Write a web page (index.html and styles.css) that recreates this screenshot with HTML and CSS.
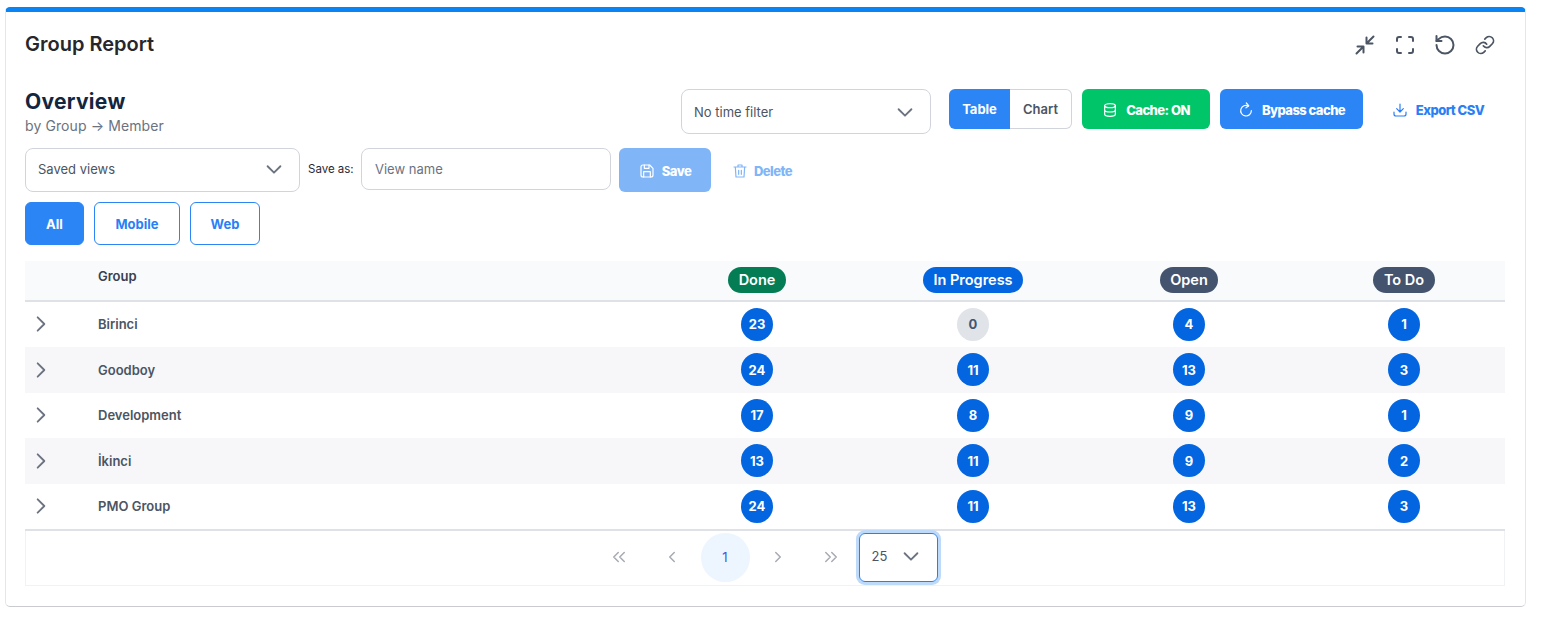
FILE: index.html
```html
<!DOCTYPE html>
<html lang="en">
<head>
<meta charset="utf-8">
<title>Group Report</title>
<link rel="stylesheet" href="styles.css">
</head>
<body>
<main class="card">
  <header class="card-head">
    <h1 class="card-title">Group Report</h1>
    <div class="tools">
      <svg class="tool" viewBox="0 0 24 24"><path d="M3.500 20.500l7-7M10.500 19.500v-6h-6M20.500 3.500l-7 7M13.500 4.500v6h6"/></svg>
      <svg class="tool" viewBox="0 0 24 24"><path d="M4 8V6a2 2 0 0 1 2-2h2M16 4h2a2 2 0 0 1 2 2v2M20 16v2a2 2 0 0 1-2 2h-2M8 20H6a2 2 0 0 1-2-2v-2"/></svg>
      <svg class="tool" viewBox="0 0 24 24"><path d="M3.500 12a8.500 8.500 0 1 0 8.500-8.500 9.200 9.200 0 0 0-6.400 2.600L3.500 8"/><path d="M3.500 3v5h5"/></svg>
      <svg class="tool" viewBox="-2 -2 28 28"><path d="M10 13a5 5 0 0 0 7.540.54l3-3a5 5 0 0 0-7.070-7.070l-1.720 1.710"/><path d="M14 11a5 5 0 0 0-7.540-.54l-3 3a5 5 0 0 0 7.070 7.070l1.710-1.710"/></svg>
    </div>
  </header>

  <section class="overview-row">
    <div class="overview-text">
      <h2 class="overview-title">Overview</h2>
      <p class="overview-sub">by Group → Member</p>
    </div>
    <div class="select time-select">
      <span>No time filter</span>
      <svg class="chev" viewBox="0 0 24 24"><path d="M5 9l7 7 7-7"/></svg>
    </div>
    <div class="seg">
      <span class="seg-item seg-on">Table</span>
      <span class="seg-item">Chart</span>
    </div>
    <span class="btn btn-green">
      <svg class="ico" viewBox="0 0 24 24"><ellipse cx="12" cy="5.500" rx="8" ry="3"/><path d="M4 5.500v13c0 1.700 3.600 3 8 3s8-1.300 8-3v-13M4 12c0 1.700 3.600 3 8 3s8-1.300 8-3"/></svg>
      Cache: ON
    </span>
    <span class="btn btn-blue">
      <svg class="ico" viewBox="0 0 24 24"><path d="M20 13a8 8 0 1 1-4.500-7.200"/><path d="M12.500 1.500l3.700 4.200-4.200 3"/></svg>
      Bypass cache
    </span>
    <span class="btn btn-link">
      <svg class="ico" viewBox="0 0 24 24"><path d="M3 15v3a3 3 0 0 0 3 3h12a3 3 0 0 0 3-3v-3M7 10l5 5 5-5M12 15V3"/></svg>
      Export CSV
    </span>
  </section>

  <section class="views-row">
    <div class="select views-select">
      <span>Saved views</span>
      <svg class="chev" viewBox="0 0 24 24"><path d="M5 9l7 7 7-7"/></svg>
    </div>
    <label class="save-label">Save as:</label>
    <div class="input">View name</div>
    <span class="btn btn-save">
      <svg class="ico" viewBox="0 0 24 24"><path d="M6 3h10l5 5v10a3 3 0 0 1-3 3H6a3 3 0 0 1-3-3V6a3 3 0 0 1 3-3z"/><path d="M8 3v5h7V3M7 21v-8h10v8"/></svg>
      Save
    </span>
    <span class="btn btn-delete">
      <svg class="ico" viewBox="0 0 24 24"><path d="M3 6h18M9 6V3h6v3M5 6l1 15h12l1-15M10 11v6M14 11v6"/></svg>
      Delete
    </span>
  </section>

  <section class="tabs">
    <span class="tab tab-on">All</span>
    <span class="tab tab-mobile">Mobile</span>
    <span class="tab tab-web">Web</span>
  </section>

  <section class="table">
    <div class="row head-row">
      <span></span>
      <span class="group-head">Group</span>
      <span class="cell"><b class="pill pill-done">Done</b></span>
      <span class="cell"><b class="pill pill-prog">In Progress</b></span>
      <span class="cell"><b class="pill pill-open">Open</b></span>
      <span class="cell"><b class="pill pill-open">To Do</b></span>
    </div>
    <div class="row">
      <svg class="expand" viewBox="0 0 24 24"><path d="M8 4l8 8-8 8"/></svg>
      <span class="name">Birinci</span>
      <span class="cell"><b class="num">23</b></span>
      <span class="cell"><b class="num num-zero">0</b></span>
      <span class="cell"><b class="num">4</b></span>
      <span class="cell"><b class="num">1</b></span>
    </div>
    <div class="row">
      <svg class="expand" viewBox="0 0 24 24"><path d="M8 4l8 8-8 8"/></svg>
      <span class="name">Goodboy</span>
      <span class="cell"><b class="num">24</b></span>
      <span class="cell"><b class="num">11</b></span>
      <span class="cell"><b class="num">13</b></span>
      <span class="cell"><b class="num">3</b></span>
    </div>
    <div class="row">
      <svg class="expand" viewBox="0 0 24 24"><path d="M8 4l8 8-8 8"/></svg>
      <span class="name">Development</span>
      <span class="cell"><b class="num">17</b></span>
      <span class="cell"><b class="num">8</b></span>
      <span class="cell"><b class="num">9</b></span>
      <span class="cell"><b class="num">1</b></span>
    </div>
    <div class="row">
      <svg class="expand" viewBox="0 0 24 24"><path d="M8 4l8 8-8 8"/></svg>
      <span class="name">İkinci</span>
      <span class="cell"><b class="num">13</b></span>
      <span class="cell"><b class="num">11</b></span>
      <span class="cell"><b class="num">9</b></span>
      <span class="cell"><b class="num">2</b></span>
    </div>
    <div class="row">
      <svg class="expand" viewBox="0 0 24 24"><path d="M8 4l8 8-8 8"/></svg>
      <span class="name">PMO Group</span>
      <span class="cell"><b class="num">24</b></span>
      <span class="cell"><b class="num">11</b></span>
      <span class="cell"><b class="num">13</b></span>
      <span class="cell"><b class="num">3</b></span>
    </div>
  </section>

  <footer class="pager">
    <span class="page"><svg viewBox="0 0 24 24"><path d="M11 6l-6 6 6 6M19 6l-6 6 6 6"/></svg></span>
    <span class="page"><svg viewBox="0 0 24 24"><path d="M15 6l-6 6 6 6"/></svg></span>
    <span class="page page-on">1</span>
    <span class="page"><svg viewBox="0 0 24 24"><path d="M9 6l6 6-6 6"/></svg></span>
    <span class="page"><svg viewBox="0 0 24 24"><path d="M5 6l6 6-6 6M13 6l6 6-6 6"/></svg></span>
    <div class="page-size">
      <span>25</span>
      <svg class="chev" viewBox="0 0 24 24"><path d="M5 9l7 7 7-7"/></svg>
    </div>
  </footer>
</main>
</body>
</html>
```

FILE: styles.css
```css
* { box-sizing: border-box; }
html, body { margin: 0; padding: 0; background: #fff; }
body { font-family: Inter, "Liberation Sans", sans-serif; color: #374151; height: 632px; overflow: hidden; padding: 7px 19px 0 5px; }
svg { fill: none; stroke: currentColor; stroke-width: 2; stroke-linecap: round; stroke-linejoin: round; flex: none; display: block; }

.card { width: 1521px; height: 600px; border: 1px solid #e4e6ea; border-top: 5px solid #0984f5; border-bottom-color: #c9cbce; border-radius: 5px; padding: 0 20px 0 19px; background: #fff; }

.card-head { height: 55px; padding: 8px 8px 0 0; display: flex; align-items: center; justify-content: space-between; }
.card-title { margin: 0; font-size: 20px; font-weight: 600; color: #27272a; }
.tools { display: flex; gap: 16px; color: #4b5563; padding-top: 3px; }
.tool { width: 24px; height: 24px; stroke-width: 2; }

.overview-row { margin-top: 22px; height: 45px; display: flex; align-items: flex-start; }
.overview-text { width: 656px; }
.overview-title { margin: 0 0 2px; font-size: 21px; line-height: 25px; font-weight: 700; color: #12263f; letter-spacing: .3px; }
.overview-sub { margin: 0; font-size: 14px; line-height: 20px; letter-spacing: .1px; color: #6b7280; }

.select { display: flex; align-items: center; justify-content: space-between; border: 1px solid #d1d5db; border-radius: 8px; background: #fff; font-size: 13px; color: #4b5563; }
.chev { width: 22px; height: 22px; color: #6b7280; }
.time-select { width: 250px; height: 45px; padding: 0 14px 0 12px; }
.time-select span { padding-top: 1px; }

.seg { display: flex; height: 40px; margin-left: 18px; }
.seg-item { display: flex; align-items: center; justify-content: center; width: 62px; font-size: 13px; font-weight: 600; color: #4b5563; border: 1px solid #d1d5db; border-left: 0; border-radius: 0 6px 6px 0; }
.seg-on { width: 61px; background: #2b85f5; color: #fff; border: 0; border-radius: 6px 0 0 6px; font-weight: 700; }

.btn { display: inline-flex; align-items: center; justify-content: center; gap: 8px; height: 40px; padding-top: 1px; border-radius: 6px; font-size: 13px; font-weight: 800; letter-spacing: -.55px; color: #fff; }
.ico { width: 16px; height: 16px; stroke-width: 1.800; }
.btn-green { width: 128px; margin-left: 10px; background: #00c569; }
.btn-blue { width: 143px; margin-left: 10px; background: #2b85f5; }
.btn-link { width: 121px; margin-left: 10px; padding-left: 9px; color: #2b7ff5; }

.views-row { margin-top: 14px; height: 44px; display: flex; align-items: flex-start; }
.views-select { width: 275px; height: 44px; padding: 0 14px 2px 12px; }
.save-label { margin: 13px 0 0 8px; width: 53px; font-size: 11.500px; line-height: 16px; color: #1f2937; }
.input { width: 250px; height: 42px; display: flex; align-items: center; padding-left: 13px; border: 1px solid #d1d5db; border-radius: 8px; font-size: 13px; color: #6b7280; }
.btn-save { width: 92px; height: 44px; margin-left: 8px; background: #80b5f7; gap: 7px; }
.btn-delete { width: 82px; height: 44px; color: #80b5f7; margin-left: 21px; gap: 6px; justify-content: flex-start; }

.tabs { margin-top: 10px; height: 43px; display: flex; gap: 10px; }
.tab { display: flex; align-items: center; justify-content: center; border: 1px solid #2b85f5; border-radius: 6px; font-size: 13px; font-weight: 700; color: #2b7ff5; }
.tab-on { width: 59px; background: #2b85f5; color: #fff; }
.tab-mobile { width: 86px; }
.tab-web { width: 70px; }

.table { margin-top: 16px; border-bottom: 2px solid #dee1e6; }
.row { display: grid; grid-template-columns: 73px 551px 216px 216px 216px 208px; align-items: center; height: 45.500px; font-size: 13px; }
.row:nth-child(odd) { background: #f7f7fa; }
.row.head-row { height: 40.500px; background: #f9fafb; border-bottom: 2px solid #dee1e6; }
.cell { display: flex; justify-content: center; }
.cell:last-child { padding-left: 6px; }
.group-head { font-weight: 600; color: #374151; align-self: start; padding-top: 7px; }
.name { font-weight: 600; color: #4b5563; }
.expand { width: 20px; height: 20px; margin-left: 6px; color: #6b7280; stroke-width: 2.200; }
.pill { display: block; height: 26px; line-height: 26px; padding: 0 10.500px; border-radius: 13px; font-size: 14.500px; font-weight: 600; color: #fff; }
.pill-done { background: #047d55; }
.pill-prog { background: #0366e0; }
.pill-open { background: #44546f; }
.num { display: flex; align-items: center; justify-content: center; width: 32px; height: 33px; border-radius: 50%; background: #0366e0; color: #fff; font-size: 13px; font-weight: 700; }
.num-zero { background: #e0e3e8; color: #44546f; }

.pager { height: 55px; display: flex; align-items: center; justify-content: center; gap: 4px; padding: 0 0 2px 2px; border: 1px solid #f1f2f4; border-top: 0; }
.page { display: flex; align-items: center; justify-content: center; width: 49px; height: 49px; border-radius: 50%; color: #a7aab3; font-size: 13px; }
.page svg { width: 18px; height: 18px; stroke-width: 2; }
.page-on { background: #edf5fe; color: #3b5bdb; }
.page-size { display: flex; align-items: center; justify-content: space-between; width: 79px; height: 49px; margin-left: -1px; padding: 0 15px 3px 12px; border: 1px solid #2b7fe6; border-radius: 6px; box-shadow: 0 0 0 3px #bddafb; font-size: 13px; color: #4b5563; }
```
